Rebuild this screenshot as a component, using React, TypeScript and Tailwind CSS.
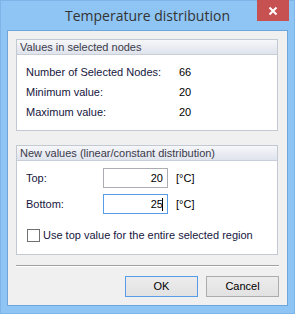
import React from "react";

const body = { fontFamily: '"Liberation Sans", Arial, sans-serif' };

function GroupHeader({ children }: { children: React.ReactNode }) {
  return (
    <div className="h-[15px] border-b border-[#c9ced8] bg-gradient-to-b from-[#f6f7fa] to-[#dfe3ec] pl-[3px] text-[11px] leading-[15px] text-[#3a3a4a]">
      {children}
    </div>
  );
}

export default function App() {
  return (
    <div className="w-[295px] h-[314px] bg-[#8ec5f4] border border-[#7db5e8] flex flex-col" style={body}>
      {/* title bar */}
      <div className="h-[29px] flex items-start relative">
        <div className="flex-1 text-center text-[14px] leading-[29px] text-[#333]" style={{ fontFamily: '"Open Sans", "Noto Sans", sans-serif' }}>
          Temperature distribution
        </div>
        <div className="absolute right-[5px] top-[-1px] w-[32px] h-[21px] bg-[#c75050] flex items-center justify-center">
          <svg width="10" height="10" viewBox="0 0 10 10">
            <path d="M1.5 1.5 L8.5 8.5 M8.5 1.5 L1.5 8.5" stroke="white" strokeWidth="2" />
          </svg>
        </div>
      </div>
      {/* client */}
      <div className="mx-[6px] border border-[#6ea6db] bg-[#f0f0f0] h-[276px] flex flex-col pl-[8px] pr-[9px] pt-[8px]">
        {/* group 1 */}
        <div className="h-[92px] border border-[#c3c9d3] bg-white flex flex-col">
          <GroupHeader>Values in selected nodes</GroupHeader>
          <div className="flex flex-col pt-[7px] pl-[9px] text-[11px] text-[#161640]">
            <div className="h-[20px] flex items-center">
              <span className="w-[153px]">Number of Selected Nodes:</span>
              <span className="text-black">66</span>
            </div>
            <div className="h-[20px] flex items-center">
              <span className="w-[153px]">Minimum value:</span>
              <span className="text-black">20</span>
            </div>
            <div className="h-[20px] flex items-center">
              <span className="w-[153px]">Maximum value:</span>
              <span className="text-black">20</span>
            </div>
          </div>
        </div>
        {/* group 2 */}
        <div className="mt-[14px] h-[110px] border border-[#c3c9d3] bg-white flex flex-col">
          <GroupHeader>New values (linear/constant distribution)</GroupHeader>
          <div className="flex flex-col pt-[7px] pl-[9px] text-[11px] text-[#161640]">
            <div className="h-[20px] flex items-center">
              <span className="w-[77px]">Top:</span>
              <div className="w-[65px] h-[20px] border border-[#abadb3] bg-white flex items-center justify-end pr-[4px] text-black">20</div>
              <span className="ml-[8px] text-black">[°C]</span>
            </div>
            <div className="h-[20px] mt-[6px] flex items-center">
              <span className="w-[77px]">Bottom:</span>
              <div className="w-[65px] h-[20px] border border-[#569de5] bg-white flex items-center justify-end pr-[4px] text-black">
                25<span className="inline-block w-[1px] h-[13px] bg-black ml-[-1px]"></span>
              </div>
              <span className="ml-[8px] text-black">[°C]</span>
            </div>
            <div className="h-[14px] mt-[14px] flex items-center">
              <div className="w-[13px] h-[13px] border border-[#707070] bg-white ml-[1px]"></div>
              <span className="ml-[3px]">Use top value for the entire selected region</span>
            </div>
          </div>
        </div>
        {/* separator */}
        <div className="mt-[10px] h-[2px] border-t border-[#a0a0a0] border-b border-b-white mr-[-1px]"></div>
        {/* buttons */}
        <div className="mt-[9px] flex justify-end gap-[8px] mr-[-1px]">
          <div className="w-[73px] h-[21px] border border-[#569de5] bg-gradient-to-b from-[#ececec] to-[#e2e2e2] flex items-center justify-center text-[11px] text-black">OK</div>
          <div className="w-[73px] h-[21px] border border-[#acacac] bg-gradient-to-b from-[#ececec] to-[#e2e2e2] flex items-center justify-center text-[11px] text-black">Cancel</div>
        </div>
      </div>
    </div>
  );
}
